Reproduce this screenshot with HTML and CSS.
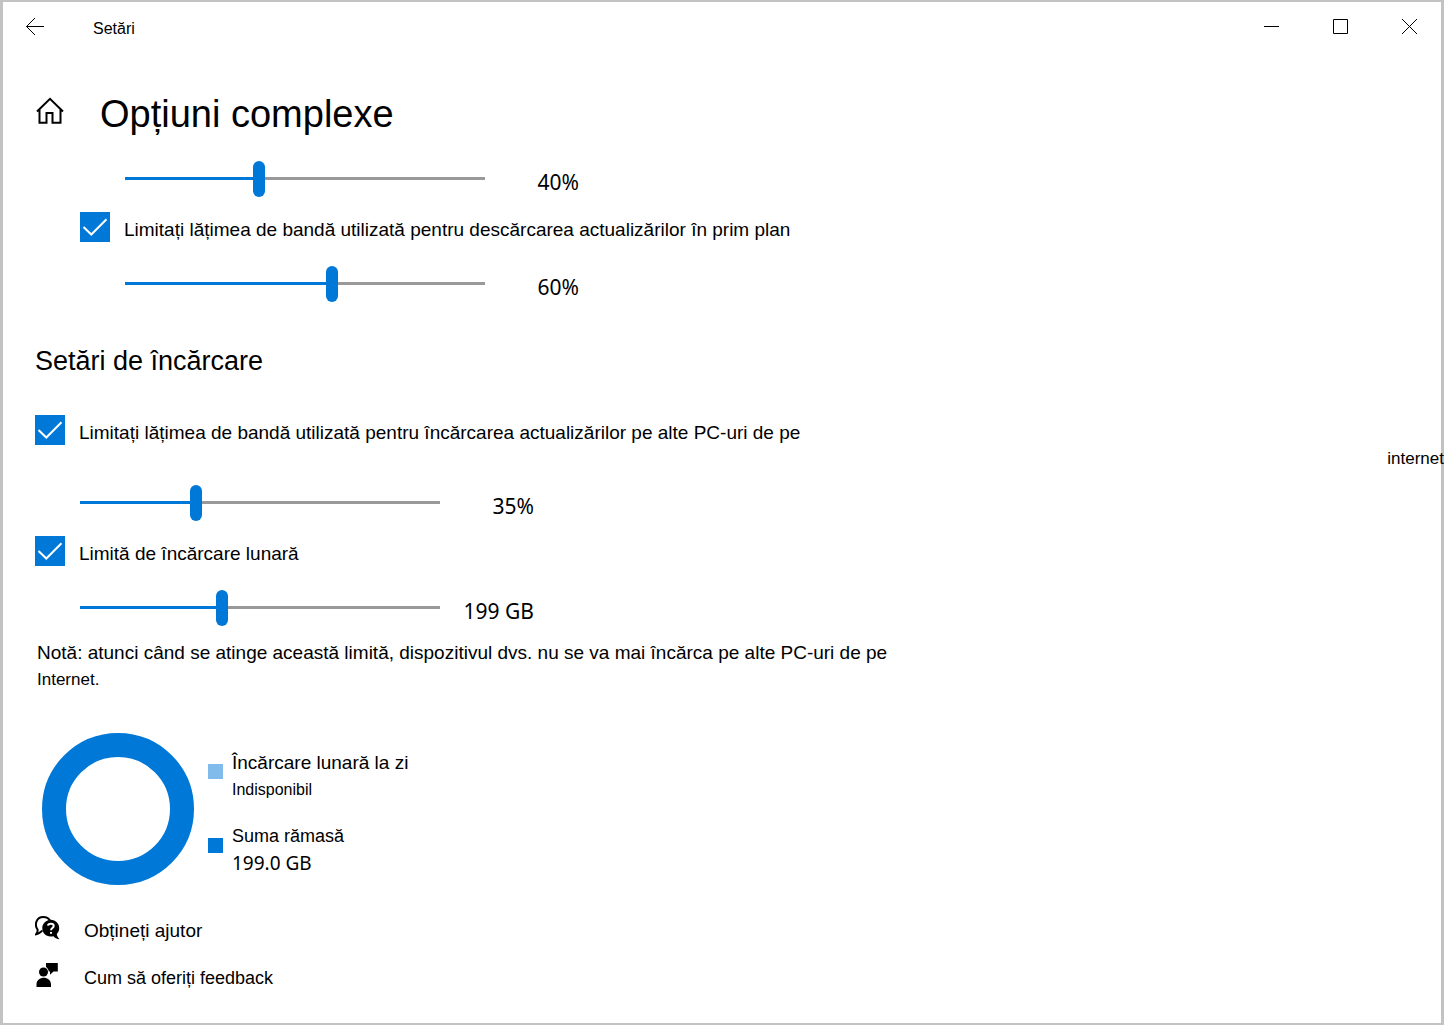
FILE: index.html
```html
<!DOCTYPE html>
<html lang="ro">
<head>
<meta charset="utf-8">
<meta name="viewport" content="width=device-width, initial-scale=1">
<title>Setări</title>
<link rel="stylesheet" href="styles.css">
</head>
<body>
<div class="window">
  <header class="titlebar">
    <button class="back" type="button" aria-label="Înapoi">
      <svg width="20" height="20" viewBox="0 0 20 20"><path d="M19 9.500H1.500M10 1L1.500 9.500L10 18"/></svg>
    </button>
    <span class="app-name">Setări</span>
    <div class="window-buttons">
      <button type="button" aria-label="Minimizare"><svg width="17" height="17" viewBox="0 0 17 17"><path d="M1 8.500H16"/></svg></button>
      <button type="button" aria-label="Maximizare"><svg width="17" height="17" viewBox="0 0 17 17"><path d="M1.500 1.500H15.500V15.500H1.500Z"/></svg></button>
      <button type="button" aria-label="Închidere"><svg width="17" height="17" viewBox="0 0 17 17"><path d="M1 1L16 16M16 1L1 16"/></svg></button>
    </div>
  </header>

  <main class="content">
    <div class="page-head">
      <button class="home" type="button" aria-label="Pagina de pornire">
        <svg width="28" height="28" viewBox="0 0 28 28"><path d="M1 14.500L14 1.800L27 14.500M3.500 12.500V25.800H10.500V16H16.500V25.800H24.500V12.500"/></svg>
      </button>
      <h1>Opțiuni complexe</h1>
    </div>

    <section class="group indented" aria-label="Setări de descărcare">
      <div class="slider-row">
        <input type="range" id="bg-down" min="5" max="100" value="40" style="--fill: 37%" aria-label="Lățime de bandă în fundal">
        <output for="bg-down">40%</output>
      </div>
      <label class="check"><input type="checkbox" checked><span>Limitați lățimea de bandă utilizată pentru descărcarea actualizărilor în prim plan</span></label>
      <div class="slider-row">
        <input type="range" id="fg-down" min="5" max="100" value="60" style="--fill: 58%" aria-label="Lățime de bandă în prim plan">
        <output for="fg-down">60%</output>
      </div>
    </section>

    <section class="group">
      <h2>Setări de încărcare</h2>
      <label class="check" for="limit-up"><input type="checkbox" id="limit-up" checked><span>Limitați lățimea de bandă utilizată pentru încărcarea actualizărilor pe alte PC-uri de pe</span></label>
      <label class="spill" for="limit-up">internet</label>
      <div class="slider-row">
        <input type="range" id="up" min="5" max="100" value="35" style="--fill: 32%" aria-label="Lățime de bandă la încărcare">
        <output for="up">35%</output>
      </div>
      <label class="check"><input type="checkbox" checked><span>Limită de încărcare lunară</span></label>
      <div class="slider-row">
        <input type="range" id="monthly" min="5" max="500" value="199" style="--fill: 39%" aria-label="Limită lunară">
        <output for="monthly">199 GB</output>
      </div>
      <p class="note">Notă: atunci când se atinge această limită, dispozitivul dvs. nu se va mai încărca pe alte PC-uri de pe <span class="note-end">Internet.</span></p>
    </section>

    <section class="usage">
      <div class="donut"></div>
      <dl class="legend">
        <div class="entry used"><dt>Încărcare lunară la zi</dt><dd>Indisponibil</dd></div>
        <div class="entry left"><dt>Suma rămasă</dt><dd>199.0 GB</dd></div>
      </dl>
    </section>

    <nav class="links">
      <a href="#ajutor">
        <svg width="25" height="24" viewBox="0 0 25 24">
          <path class="line" d="M7.500 14.500C6 15.500 4.500 17.500 1.200 18.200C2.500 16.500 2.800 15.300 2.600 13.600C-.8 9 1 1 8.300 1C11.500 1 13.800 2.500 15 4.500"/>
          <path d="M15.800 3.800C20.500 3.800 24.200 7.500 24.200 12C24.200 14.700 23.200 16.600 21.800 18C22 20 23 21.700 24.500 23.200C21.800 22.900 20 22 18.500 20.200C11.500 21.800 7.300 17.500 7.300 12C7.300 7.500 11.200 3.800 15.800 3.800Z"/>
          <path class="mark" d="M13 9.600C13.200 7.200 18.700 7 18.700 9.900C18.700 11.900 16 12 16 14.200M16 16V17.800"/>
        </svg>
        <span>Obțineți ajutor</span>
      </a>
      <a class="small" href="#feedback">
        <svg width="25" height="24" viewBox="0 0 25 24">
          <circle cx="8.500" cy="9" r="4.500"/>
          <path d="M1.500 24V21.500C1.500 12.500 16 12.500 16 21.500V24ZM11 0H22.800V8.500H18.500L15 11.800V8.500H13.800C13.500 6.500 12.500 5 11 4Z"/>
        </svg>
        <span>Cum să oferiți feedback</span>
      </a>
    </nav>
  </main>
</div>
</body>
</html>
```
FILE: styles.css
```css
* {
  box-sizing: border-box;
}

body {
  margin: 0;
  background: #fff;
  color: #000;
  font: 19px/36px "Liberation Sans", Arial, sans-serif;
}

.window {
  min-height: 100vh;
  border: solid #c3c3c3;
  border-width: 2px 3px;
}

button {
  display: flex;
  align-items: center;
  justify-content: center;
  padding: 0;
  border: 0;
  background: none;
}

svg {
  flex: none;
  fill: none;
  stroke: #000;
}

/* Title bar */
.titlebar {
  display: flex;
  align-items: center;
  height: 50px;
}

.back {
  width: 64px;
  height: 48px;
}

.app-name {
  margin-left: 26px;
  padding-top: 4px;
  font-size: 16px;
}

.window-buttons {
  display: flex;
  gap: 6px;
  margin-left: auto;
}

.window-buttons button {
  width: 63px;
  height: 50px;
  padding-bottom: 2px;
}

/* Page */
.content {
  padding: 32px 0 20px 32px;
}

.page-head {
  display: flex;
  align-items: center;
  gap: 35px;
  height: 60px;
  margin-bottom: 17px;
}

.home {
  width: 30px;
  height: 36px;
  padding-bottom: 6px;
}

.home svg {
  stroke-width: 2;
}

h1,
h2 {
  margin: 0;
  font-weight: 400;
}

h1 {
  font-size: 38px;
  line-height: 60px;
}

h2 {
  margin: 39px 0 38px;
  font-size: 27px;
  line-height: 32px;
}

.indented {
  padding-left: 45px;
}

.check {
  display: flex;
  gap: 14px;
  margin-bottom: -2px;
}

.check input {
  flex: none;
  appearance: none;
  width: 30px;
  height: 30px;
  margin: 0;
  border: 2px solid #0078d7;
}

.check input:checked {
  background: #0078d7 url("data:image/svg+xml,%3Csvg xmlns='http://www.w3.org/2000/svg' viewBox='0 0 30 30'%3E%3Cpath d='M3.500 15L11.300 22.500L26.500 7.300' fill='none' stroke='%23fff' stroke-width='2'/%3E%3C/svg%3E") border-box center / 30px 30px;
}

.slider-row {
  display: flex;
  height: 40px;
  padding-left: 45px;
}

.check + .slider-row {
  margin-top: 20px;
}

.slider-row + .check {
  margin-top: 11px;
}

.slider-row input {
  appearance: none;
  width: 360px;
  height: 35px;
  margin: 0;
  background: none;
}

.slider-row input::-webkit-slider-runnable-track {
  height: 3px;
  background: linear-gradient(to right, #0078d7 var(--fill), #999 var(--fill));
}

.slider-row input::-webkit-slider-thumb {
  appearance: none;
  width: 12px;
  height: 36px;
  margin-top: -16px;
  border-radius: 6px;
  background: #0078d7;
}

.slider-row output {
  width: 94px;
  font: 21px/42px "Noto Sans", sans-serif;
  text-align: right;
}

/* The last word of the label runs over the window's frame */
.spill {
  display: block;
  margin: 0 -3px 16px 0;
  font-size: 17px;
  line-height: 20px;
  text-align: right;
}

.note {
  margin: 9px 0 0 2px;
  line-height: 27px;
}

.note-end {
  display: block;
  font-size: 17px;
}

/* Upload usage */
.usage {
  display: flex;
  gap: 14px;
  margin: 40px 0 22px 7px;
}

.donut {
  width: 152px;
  height: 152px;
  border: 24px solid #0078d7;
  border-radius: 50%;
}

.legend {
  display: grid;
  align-content: start;
  gap: 20px;
  margin: 0;
  padding-top: 16px;
  line-height: 27px;
}

.entry {
  display: grid;
  grid-template-columns: 15px auto;
  column-gap: 9px;
}

.entry::before {
  content: "";
  grid-row: span 2;
  height: 15px;
  margin-top: 15px;
  background: #0078d7;
}

.used::before {
  background: #80bbeb;
}

.entry dd {
  margin: 0;
  font-size: 16px;
}

.left dt {
  font-size: 18px;
}

.left dd {
  font-family: "Noto Sans", sans-serif;
  font-size: 19px;
}

/* Links */
.links a {
  display: flex;
  align-items: center;
  gap: 24px;
  width: fit-content;
  height: 47px;
  color: inherit;
  text-decoration: none;
}

.links .small {
  font-size: 18px;
}

.links svg {
  margin-bottom: 5px;
  fill: #000;
  stroke: none;
}

.links .line {
  fill: none;
  stroke: #000;
  stroke-width: 2;
}

.links .mark {
  fill: none;
  stroke: #fff;
  stroke-width: 2;
}
```
